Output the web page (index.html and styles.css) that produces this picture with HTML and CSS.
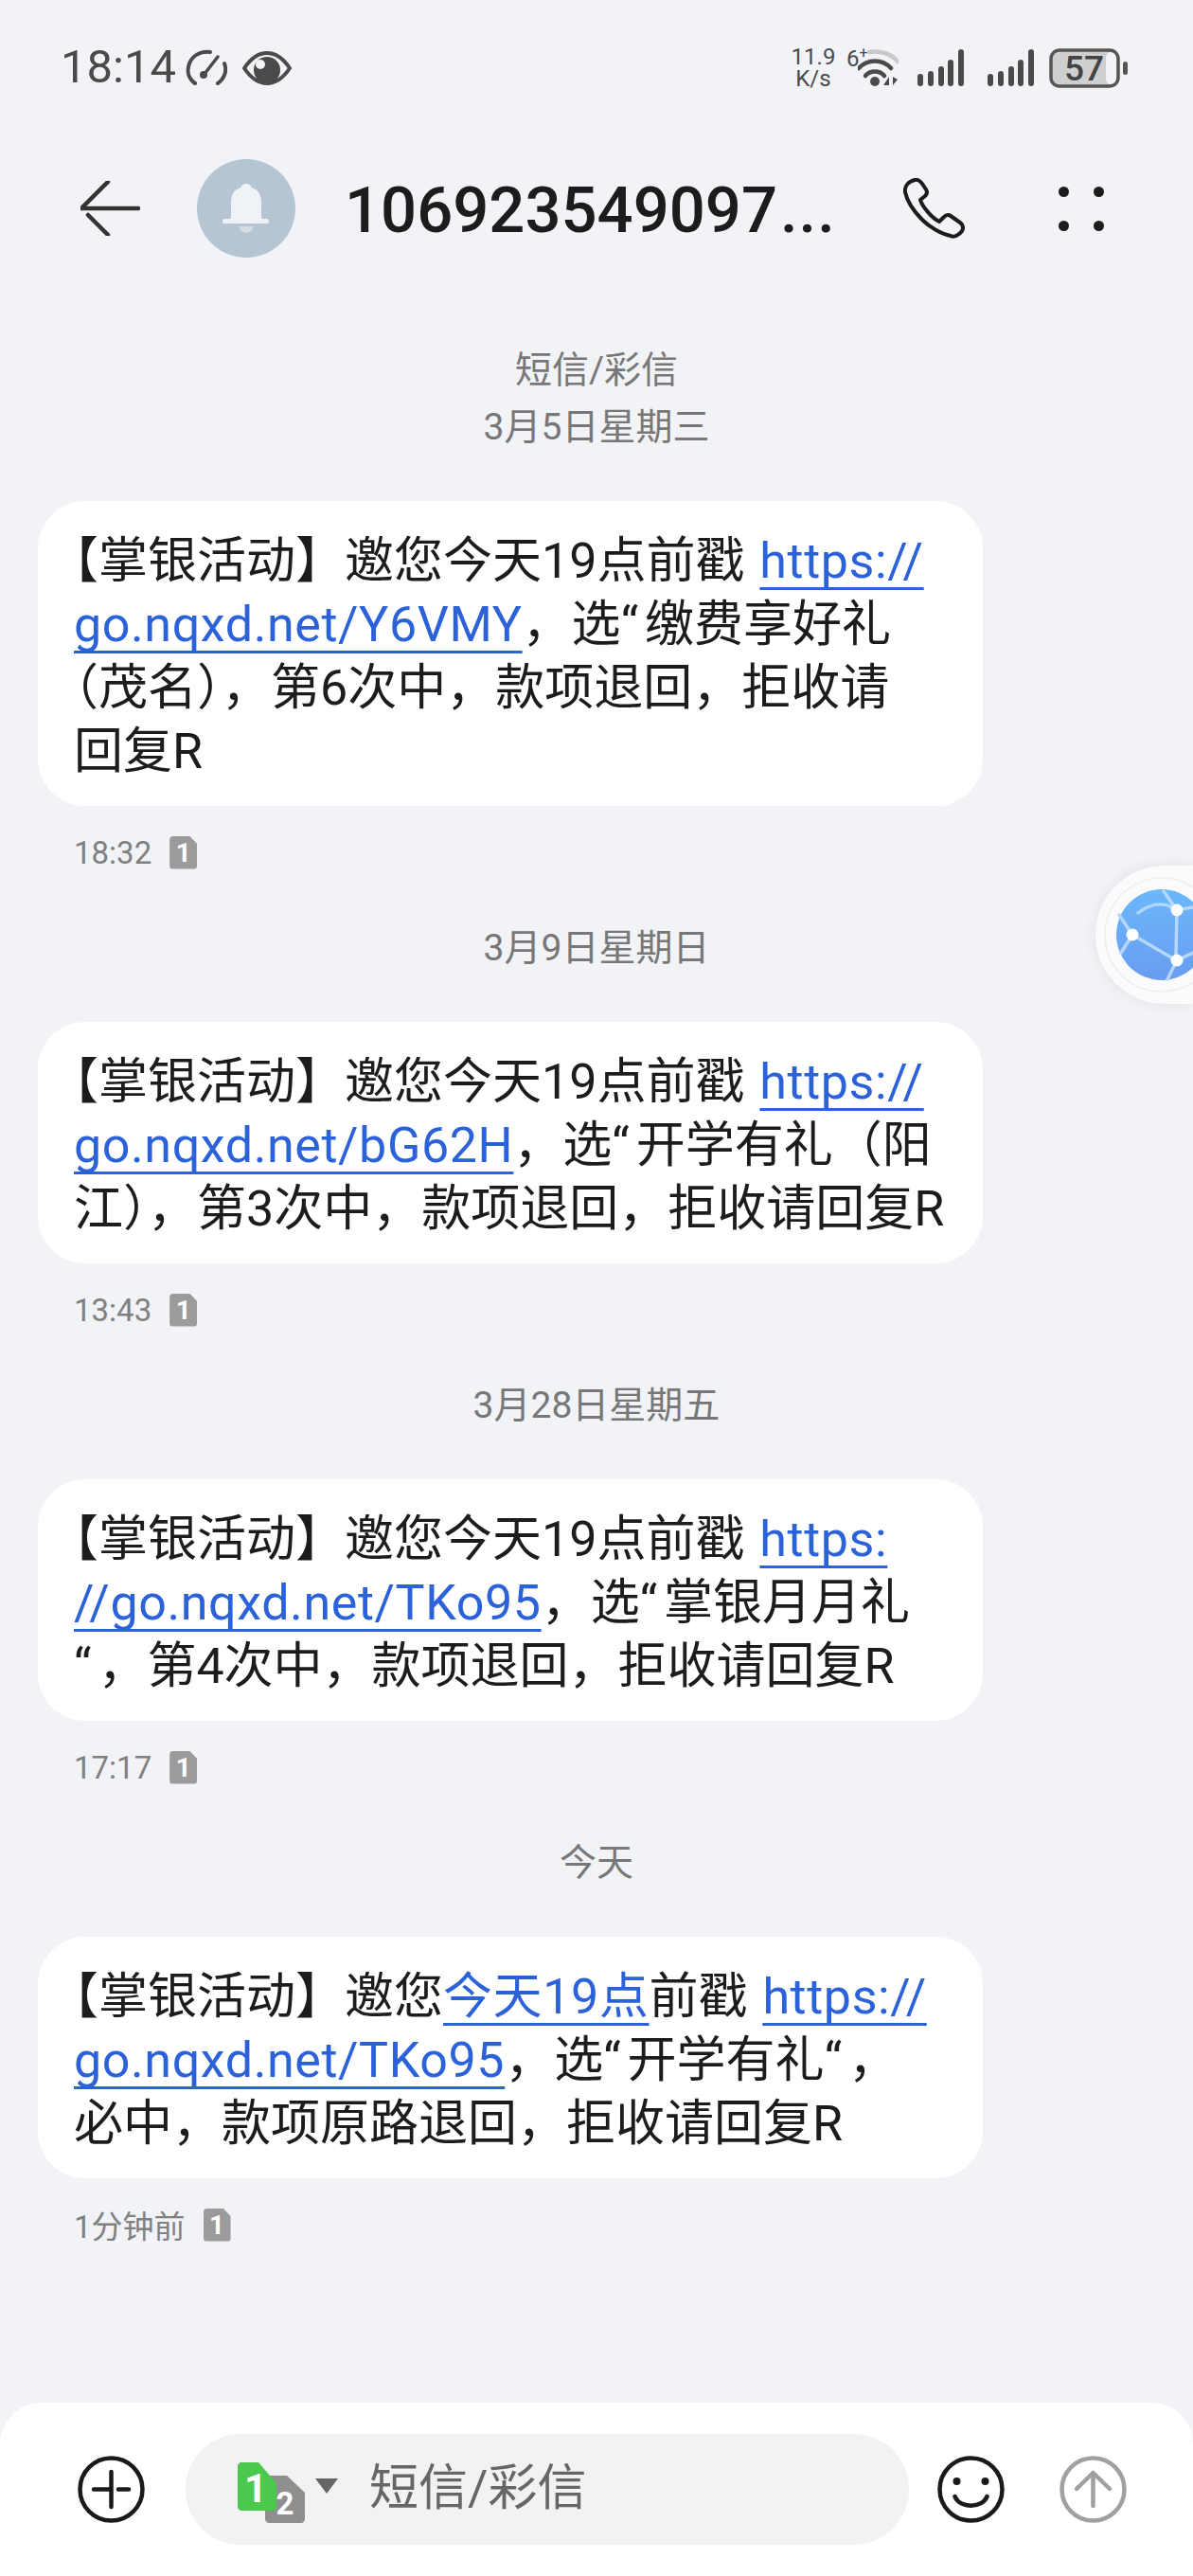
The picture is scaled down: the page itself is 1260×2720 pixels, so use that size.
FILE: index.html
```html
<!DOCTYPE html>
<html lang="zh-CN">
<head>
  <meta charset="UTF-8" />
  <meta name="viewport" content="width=device-width, initial-scale=1.0"/>
  <title>短信</title>
  <link rel="stylesheet" href="styles.css">
</head>
<body>

<div class="status-bar">
  <span class="clock">18:14</span>
  <svg class="ic-gauge" viewBox="0 0 44 39">
    <path d="M10 36C3 31 1 23 4 15 7 7 15 2 26 3" fill="none" stroke="#4a4a4a" stroke-width="4" stroke-linecap="round"/>
    <path d="M41 15C44 23 41 31 34 36" fill="none" stroke="#4a4a4a" stroke-width="4" stroke-linecap="round"/>
    <path d="M20 26 34 8" stroke="#4a4a4a" stroke-width="3.500" stroke-linecap="round"/>
    <circle cx="19" cy="27" r="4" fill="#4a4a4a"/>
  </svg>
  <svg class="ic-eye" viewBox="0 0 52 36">
    <path d="M2 18C10 6 18 2 26 2S42 6 50 18C42 30 34 34 26 34S10 30 2 18Z" fill="none" stroke="#4a4a4a" stroke-width="4" stroke-linejoin="round"/>
    <circle cx="26" cy="20" r="14" fill="#4a4a4a"/>
    <circle cx="19" cy="14" r="5" fill="#f1f3f6"/>
  </svg>
  <div class="status-right">
    <div class="speed"><span>11.9</span><span>K/s</span></div>
    <span class="wifi-gen">6<sup>+</sup></span>
    <svg class="ic-wifi" viewBox="0 0 43 39">
      <path d="M12 3C24 1 36 5 42 13" fill="none" stroke="#c9c9c9" stroke-width="4.500" stroke-linecap="round"/>
      <path d="M1 20C10 10 26 10 35 20" fill="none" stroke="#4a4a4a" stroke-width="4.500" stroke-linecap="round"/>
      <path d="M8 28C13 22 23 22 28 28" fill="none" stroke="#4a4a4a" stroke-width="4.500" stroke-linecap="round"/>
      <circle cx="18" cy="34" r="5" fill="#4a4a4a"/>
      <path d="M33 29V38L27 38ZM37 29V38L42 32Z" fill="#4a4a4a"/>
    </svg>
    <svg class="ic-signal" viewBox="0 0 50 39">
      <rect x="0" y="26" width="6" height="13" rx="3"/>
      <rect x="11" y="23" width="6" height="16" rx="3"/>
      <rect x="22" y="18" width="6" height="21" rx="3"/>
      <rect x="32" y="11" width="6" height="28" rx="3"/>
      <rect x="43" y="0" width="6" height="39" rx="3"/>
    </svg>
    <svg class="ic-signal sim2" viewBox="0 0 50 39">
      <rect x="0" y="26" width="6" height="13" rx="3"/>
      <rect x="11" y="23" width="6" height="16" rx="3"/>
      <rect x="22" y="18" width="6" height="21" rx="3"/>
      <rect x="32" y="11" width="6" height="28" rx="3"/>
      <rect x="43" y="0" width="6" height="39" rx="3"/>
    </svg>
    <svg class="ic-battery" viewBox="0 0 84 42">
      <rect x="2" y="2" width="71" height="38" rx="9" fill="#cfcfcf"/>
      <rect x="60" y="4" width="11" height="34" rx="6" fill="#f1f3f6"/>
      <rect x="2" y="2" width="71" height="38" rx="9" fill="none" stroke="#555" stroke-width="3.500"/>
      <rect x="78" y="14" width="5" height="14" rx="2.500" fill="#555"/>
      <text x="37" y="34" text-anchor="middle" class="battery-num">57</text>
    </svg>
  </div>
</div>

<div class="top-bar">
  <svg class="ic-back" viewBox="0 0 63 58">
    <path d="M1 29H61M1 29 29 1M8 36 29 57" fill="none" stroke="#333" stroke-width="4.500" stroke-linecap="round"/>
  </svg>
  <div class="avatar">
    <svg viewBox="0 0 104 104">
      <path d="M52 26C49 26 47 28 46.500 30 39 32 36 38 36 46V60C36 62 35 63 34 64H70C69 63 68 62 68 60V46C68 38 65 32 57.500 30 57 28 55 26 52 26Z" fill="#eff3f7"/>
      <rect x="27" y="63" width="49" height="5" rx="2.500" fill="#eff3f7"/>
      <path d="M45 71H59A7 7 0 0 1 45 71Z" fill="#d5dee6"/>
    </svg>
  </div>
  <div class="title">106923549097<span class="dots">...</span></div>
  <svg class="ic-phone" viewBox="0 0 65 64">
    <path d="M12 2C16 1 18 3 20 6L24 12C26 15 25 17 23 19L18 23C20 30 30 42 38 46L42 42C45 39 47 38 50 40L60 47C63 49 64 53 62 56 59 60 54 63 50 61 40 59 28 52 20 44 11 35 4 24 2 15 1 9 5 4 12 2Z" fill="none" stroke="#1c1c1c" stroke-width="4" stroke-linejoin="round"/>
  </svg>
  <div class="more">
    <i></i><i></i><i></i><i></i>
  </div>
</div>

<div class="thread">
  <div class="date-label">短信/彩信<br>3月5日星期三</div>
  <div class="bubble">
    【掌银活动】邀您今天19点前戳 <a>https://</a><br>
    <a>go.nqxd.net/Y6VMY</a>，选<span class="q">“</span>缴费享好礼<br>
    （茂名），第6次中，款项退回，拒收请<br>
    回复R
  </div>
  <div class="meta"><span>18:32</span><b class="sim-badge">1</b></div>

  <div class="date-label spaced">3月9日星期日</div>
  <div class="bubble">
    【掌银活动】邀您今天19点前戳 <a>https://</a><br>
    <a>go.nqxd.net/bG62H</a>，选<span class="q">“</span>开学有礼（阳<br>
    江），第3次中，款项退回，拒收请回复R
  </div>
  <div class="meta"><span>13:43</span><b class="sim-badge">1</b></div>

  <div class="date-label spaced">3月28日星期五</div>
  <div class="bubble">
    【掌银活动】邀您今天19点前戳 <a>https:</a><br>
    <a>//go.nqxd.net/TKo95</a>，选<span class="q">“</span>掌银月月礼<br>
    <span class="q">“</span>，第4次中，款项退回，拒收请回复R
  </div>
  <div class="meta"><span>17:17</span><b class="sim-badge">1</b></div>

  <div class="date-label spaced">今天</div>
  <div class="bubble">
    【掌银活动】邀您<a>今天19点</a>前戳 <a>https://</a><br>
    <a>go.nqxd.net/TKo95</a>，选<span class="q">“</span>开学有礼<span class="q">“</span>，<br>
    必中，款项原路退回，拒收请回复R
  </div>
  <div class="meta"><span>1分钟前</span><b class="sim-badge">1</b></div>
</div>

<div class="float-btn">
  <svg viewBox="0 0 103 146">
    <defs>
      <linearGradient id="globe" x1="0" y1="0" x2="0" y2="1">
        <stop offset="0" stop-color="#6ab8fb"/>
        <stop offset="1" stop-color="#6a9cf0"/>
      </linearGradient>
    </defs>
    <circle cx="70" cy="73" r="60" fill="none" stroke="#efecec" stroke-width="1.500"/>
    <circle cx="70" cy="73" r="48" fill="url(#globe)"/>
    <path d="M45 50C55 42 70 36 86 47L103 44M39 73 80 97M86 47 85 94M72 27 86 47M25 52 39 73 27 92M86 100 76 120M86 100 103 92" fill="none" stroke="#b5d7fb" stroke-width="3.500" stroke-linecap="round"/>
    <circle cx="86" cy="47" r="6.500" fill="#fff"/>
    <circle cx="39" cy="73" r="6.500" fill="#fff"/>
    <circle cx="86" cy="100" r="6.500" fill="#fff"/>
  </svg>
</div>

<div class="composer">
  <svg class="ic-round" viewBox="0 0 71 71">
    <circle cx="35.500" cy="35.500" r="33" fill="none" stroke="#1a1a1a" stroke-width="4.500"/>
    <path d="M35.500 17V54M17 35.500H35.500M43 35.500H54" fill="none" stroke="#1a1a1a" stroke-width="4.500" stroke-linecap="round"/>
  </svg>
  <div class="input-pill">
    <svg class="ic-sim" viewBox="0 0 71 64">
      <path d="M33 14H52L71 32V60C71 62 69 64 67 64H33C31 64 29 62 29 60V18C29 16 31 14 33 14Z" fill="#8f8f8f"/>
      <path d="M4 0H22L41 22V47C41 49 39 51 37 51H4C2 51 0 49 0 47V4C0 2 2 0 4 0Z" fill="#4cc94c"/>
      <text x="19" y="42" text-anchor="middle" class="sim-num one">1</text>
      <text x="50" y="55" text-anchor="middle" class="sim-num">2</text>
    </svg>
    <span class="sim-caret"></span>
    <span class="placeholder">短信/彩信</span>
  </div>
  <svg class="ic-round ic-smile" viewBox="0 0 71 71">
    <circle cx="35.500" cy="35.500" r="33" fill="none" stroke="#1a1a1a" stroke-width="4.500"/>
    <circle cx="20.500" cy="27" r="4" fill="#1a1a1a"/>
    <circle cx="50.500" cy="27" r="4" fill="#1a1a1a"/>
    <path d="M18.500 43C24 56 47 56 52.500 43" fill="none" stroke="#1a1a1a" stroke-width="4.500" stroke-linecap="round"/>
  </svg>
  <svg class="ic-round ic-send" viewBox="0 0 71 71">
    <circle cx="35.500" cy="35.500" r="33" fill="none" stroke="#a0a0a0" stroke-width="4.500"/>
    <path d="M35.500 18V53M18 35 35.500 18 53 35" fill="none" stroke="#a0a0a0" stroke-width="4.500" stroke-linecap="round" stroke-linejoin="round"/>
  </svg>
</div>

</body>
</html>
```

FILE: styles.css
```css
* { box-sizing: border-box; }

body {
  margin: 0;
  width: 1260px;
  height: 2720px;
  position: relative;
  overflow: hidden;
  display: flex;
  flex-direction: column;
  background: #f1f3f6;
  font-family: Roboto, "Noto Sans CJK SC", sans-serif;
  color: #1c1c1c;
}

svg { display: block; flex: none; }

/* status bar */
.status-bar {
  height: 146px;
  flex: none;
  display: flex;
  align-items: flex-start;
  padding: 46px 68px 0 64px;
  color: #4a4a4a;
}
.clock {
  font-size: 49px;
  line-height: 50px;
  width: 132px;
}
.ic-gauge { width: 44px; height: 39px; margin-top: 6px; }
.ic-eye { width: 52px; height: 36px; margin: 8px 0 0 16px; }
.status-right {
  margin-left: auto;
  display: flex;
  align-items: flex-start;
}
.speed {
  width: 50px;
  display: flex;
  flex-direction: column;
  align-items: center;
  font-size: 24px;
  line-height: 23px;
  margin-top: 3px;
}
.wifi-gen {
  width: 12px;
  margin-left: 10px;
  font-size: 24px;
  line-height: 24px;
  margin-top: 4px;
  white-space: nowrap;
}
.wifi-gen sup { font-size: 16px; line-height: 0; }
.ic-wifi { width: 43px; height: 39px; margin-top: 6px; }
.ic-signal { width: 50px; height: 39px; margin: 6px 0 0 20px; fill: #4a4a4a; }
.ic-signal.sim2 { margin-left: 24px; }
.ic-battery { width: 84px; height: 42px; margin: 5px 0 0 15px; }
.battery-num { font-size: 37px; font-weight: 500; fill: #444; }

/* header */
.top-bar {
  height: 148px;
  flex: none;
  display: flex;
  align-items: center;
  padding-left: 85px;
}
.ic-back { width: 63px; height: 58px; }
.avatar {
  width: 104px;
  height: 104px;
  margin: 0 52px 0 60px;
  border-radius: 50%;
  background: #b5c5d4;
}
.title {
  width: 590px;
  padding-top: 3px;
  font-size: 67px;
  font-weight: 500;
  line-height: 80px;
  white-space: nowrap;
}
.dots { letter-spacing: 1px; margin-left: 3px; }
.ic-phone { width: 65px; height: 64px; }
.more {
  display: grid;
  grid-template-columns: 11px 11px;
  column-gap: 26px;
  row-gap: 25px;
  margin-left: 99px;
}
.more i {
  width: 11px;
  height: 11px;
  border-radius: 50%;
  background: #1c1c1c;
}

/* messages */
.thread {
  flex: 1;
  padding: 67px 40px 0;
}
.date-label {
  text-align: center;
  font-size: 39px;
  line-height: 60px;
  color: #777;
}
.date-label.spaced { margin-top: 51px; }
.bubble {
  margin-top: 48px;
  width: 998px;
  padding: 30px 20px 24px 38px;
  background: #fff;
  border-radius: 50px;
  font-size: 52px;
  line-height: 67px;
  word-spacing: 3px;
  white-space: nowrap;
  text-spacing-trim: trim-start;
}
.bubble a {
  color: #2c62d9;
  letter-spacing: 0.6px;
  text-decoration: underline;
  text-decoration-thickness: 3px;
  text-underline-offset: 10px;
  text-decoration-skip-ink: none;
}
.q { letter-spacing: 7px; }
.meta {
  display: flex;
  align-items: center;
  height: 40px;
  margin-top: 29px;
  padding-left: 38px;
  font-size: 33px;
  color: #808080;
}
.sim-badge {
  width: 29px;
  height: 35px;
  margin-left: 19px;
  background: #9b9b9b;
  border-radius: 4px;
  clip-path: polygon(0 0, 72% 0, 100% 24%, 100% 100%, 0 100%);
  color: #fff;
  font-size: 28px;
  font-weight: 700;
  line-height: 35px;
  text-align: center;
}

/* floating assistant button */
.float-btn {
  position: absolute;
  left: 1157px;
  top: 914px;
  width: 103px;
  height: 146px;
  background: #fbfbfc;
  border-radius: 73px 0 0 73px;
  box-shadow: 0 0 16px rgba(0,0,0,0.07);
}
.float-btn svg { width: 103px; height: 146px; }

/* bottom input */
.composer {
  height: 183px;
  flex: none;
  display: flex;
  align-items: center;
  padding: 33px 0 33px 82px;
  background: #fff;
  border-radius: 44px 44px 0 0;
}
.ic-round { width: 71px; height: 71px; }
.input-pill {
  width: 764px;
  height: 117px;
  margin: 0 30px 0 43px;
  padding-left: 55px;
  display: flex;
  align-items: center;
  background: #f1f2f4;
  border-radius: 58px;
}
.ic-sim { width: 71px; height: 64px; margin-top: 6px; }
.sim-num { font-size: 33px; font-weight: 700; fill: #fff; }
.sim-num.one { font-size: 42px; }
.sim-caret {
  width: 0;
  height: 0;
  margin: 0 33px 8px 11px;
  border-left: 12px solid transparent;
  border-right: 12px solid transparent;
  border-top: 16px solid #666;
}
.placeholder {
  font-size: 52px;
  line-height: 60px;
  margin-bottom: 1px;
  color: #666;
}
.ic-send { margin-left: 58px; }
```
